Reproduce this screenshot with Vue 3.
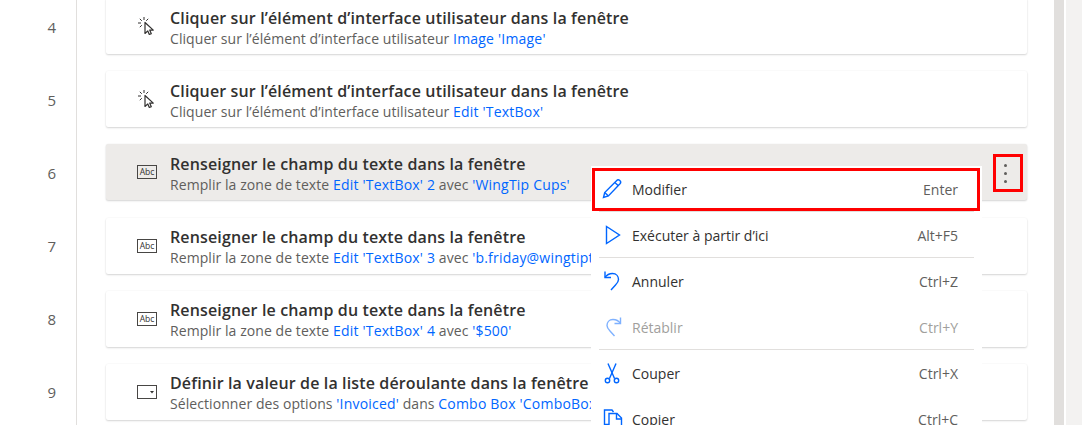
<template>
  <div class="page">
    <div class="flow">
      <div class="steps">
        <div v-for="step in steps" :key="step.num" class="step">
          <div class="num">{{ step.num }}</div>
          <div class="card" :class="{ selected: step.selected }">
            <div class="step-icon">
              <svg v-if="step.icon === 'click'" width="20" height="20" viewBox="0 0 20 20">
                <path d="M7 1v3M1 7h3M2.800 2.800l2 2M11.200 2.800l-2 2M2.800 11.200l2-2" fill="none" stroke="#323130" stroke-width="1" />
                <path d="M8 6.500v11l2.800-2.600 1.500 3.600 2-.8-1.600-3.600h3.600z" fill="#fff" stroke="#323130" stroke-width="1.200" stroke-linejoin="round" />
              </svg>
              <svg v-else-if="step.icon === 'text'" width="20" height="14" viewBox="0 0 20 14">
                <rect x=".5" y=".5" width="19" height="13" fill="none" stroke="#484644" />
                <text x="10" y="10.400" text-anchor="middle" class="abc">Abc</text>
              </svg>
              <svg v-else width="20" height="14" viewBox="0 0 20 14">
                <rect x=".5" y=".5" width="19" height="13" fill="none" stroke="#484644" />
                <path d="M13 6h4l-2 2.400z" fill="#323130" />
              </svg>
            </div>
            <div class="step-text">
              <div class="title">{{ step.title }}</div>
              <div class="sub">
                <template v-for="(part, i) in step.parts" :key="i">
                  <span :class="{ link: part.link }">{{ part.text }}</span>
                </template>
              </div>
            </div>
            <div v-if="step.selected" class="more">
              <i></i><i></i><i></i>
            </div>
          </div>
        </div>
      </div>
      <div class="scrollbar"></div>
      <div class="side"></div>
    </div>

    <!-- context menu -->
    <div class="menu">
      <div v-for="item in menu" :key="item.label" class="item" :class="{ sep: item.sep, off: item.off, hit: item.hit }">
        <span class="item-icon">
          <svg width="24" height="24" viewBox="0 0 24 24" fill="none" stroke="#0066ff" stroke-width="1.400" :opacity="item.off ? 0.5 : 1">
            <path v-for="(d, i) in item.paths" :key="i" :d="d" />
          </svg>
        </span>
        <span class="label">{{ item.label }}</span>
        <span class="key">{{ item.key }}</span>
      </div>
    </div>
  </div>
</template>

<script setup>
const clickTitle = 'Cliquer sur l’élément d’interface utilisateur dans la fenêtre'
const textTitle = 'Renseigner le champ du texte dans la fenêtre'
const clickSub = 'Cliquer sur l’élément d’interface utilisateur '
const textSub = 'Remplir la zone de texte '

const steps = [
  { num: 4, icon: 'click', title: clickTitle, parts: [{ text: clickSub }, { text: "Image 'Image'", link: true }] },
  { num: 5, icon: 'click', title: clickTitle, parts: [{ text: clickSub }, { text: "Edit 'TextBox'", link: true }] },
  {
    num: 6, icon: 'text', title: textTitle, selected: true,
    parts: [{ text: textSub }, { text: "Edit 'TextBox' 2", link: true }, { text: ' avec ' }, { text: "'WingTip Cups'", link: true }]
  },
  {
    num: 7, icon: 'text', title: textTitle,
    parts: [{ text: textSub }, { text: "Edit 'TextBox' 3", link: true }, { text: ' avec ' }, { text: "'b.friday@wingtiptoys.com'", link: true }]
  },
  {
    num: 8, icon: 'text', title: textTitle,
    parts: [{ text: textSub }, { text: "Edit 'TextBox' 4", link: true }, { text: ' avec ' }, { text: "'$500'", link: true }]
  },
  {
    num: 9, icon: 'combo', title: 'Définir la valeur de la liste déroulante dans la fenêtre',
    parts: [{ text: 'Sélectionner des options ' }, { text: "'Invoiced'", link: true }, { text: ' dans ' }, { text: "Combo Box 'ComboBox'", link: true }]
  }
]

const menu = [
  { label: 'Modifier', key: 'Enter', hit: true, sep: true, paths: ['M2.500 20.500l1.200-5L15.500 3.700a2.200 2.200 0 0 1 3.500 3.100L7.400 19z', 'M13.800 5.400l3.600 3.400', 'M3.700 15.500l3.700 3.500'] },
  { label: 'Exécuter à partir d’ici', key: 'Alt+F5', sep: true, paths: ['M5.500 3.500v17L18.500 12z'] },
  { label: 'Annuler', key: 'Ctrl+Z', paths: ['M4 2.500v6h6', 'M4 8.500C6 5.500 9 4.500 11.500 4.500c4 0 6 3 6 6 0 2.500-1.500 4-3 5.500L10 21'] },
  { label: 'Rétablir', key: 'Ctrl+Y', off: true, sep: true, paths: ['M19.500 2.500v6h-6', 'M19.500 8.500c-2-3-5-4-7.500-4-4 0-6 3-6 6 0 2.500 1.500 4 3 5.500l4.500 5'] },
  { label: 'Couper', key: 'Ctrl+X', paths: ['M7 2.500l6.500 15', 'M15 2.500L8.500 17.500', 'M8.700 19.500a2.200 2.200 0 1 1-4.400 0 2.200 2.200 0 0 1 4.400 0z', 'M17.700 19.500a2.200 2.200 0 1 1-4.400 0 2.200 2.200 0 0 1 4.400 0z'] },
  { label: 'Copier', key: 'Ctrl+C', paths: ['M8 17.500H3.500V3H11l1.500 2', 'M8 6.500h8l4.500 4.500v12H8z', 'M15.500 6.500V12h5'] }
]
</script>

<style>
html, body {
  margin: 0;
  background: #fff;
}
</style>

<style scoped>
.page {
  position: relative;
  width: 1082px;
  height: 425px;
  overflow: hidden;
  background: #fff;
  font-family: "Open Sans", "Noto Sans", sans-serif;
}

.flow {
  display: flex;
  height: 100%;
}

.steps {
  flex: 1;
  margin-top: -2px;
}

.step {
  display: flex;
  height: 73.2px;
}

.num {
  width: 77px;
  box-sizing: border-box;
  padding: 18.5px 20px 0 0;
  text-align: right;
  font-size: 15px;
  line-height: 20px;
  color: #605e5c;
  border-right: 1px solid #e1dfdd;
  flex-shrink: 0;
}

.card {
  position: relative;
  display: flex;
  align-items: center;
  width: 921px;
  height: 56px;
  margin-left: 29px;
  border-radius: 2px;
  background: #fff;
  box-shadow: 0 1px 2px rgba(0, 0, 0, 0.16), 0 0 2px rgba(0, 0, 0, 0.05);
  white-space: nowrap;
}

.card.selected {
  background: #edebe9;
}

.step-icon {
  width: 20px;
  margin-left: 31px;
  margin-right: 13px;
  display: flex;
  align-items: center;
  justify-content: center;
}

.abc {
  font-size: 8.5px;
  font-family: "Open Sans", sans-serif;
  fill: #323130;
}

.step-text {
  padding-top: 4px;
}

.title {
  font-size: 16px;
  font-weight: 600;
  line-height: 20px;
  margin-bottom: 1px;
  letter-spacing: 0.14px;
  color: #323130;
}

.sub {
  font-size: 14px;
  line-height: 20px;
  letter-spacing: 0.07px;
  color: #605e5c;
}

.link {
  color: #0066ff;
  letter-spacing: 0.2px;
}

.more {
  position: absolute;
  left: 887px;
  top: 10px;
  width: 30px;
  height: 38px;
  box-sizing: border-box;
  padding-right: 6px;
  border: 3px solid #f00;
  display: flex;
  flex-direction: column;
  align-items: center;
  justify-content: center;
  gap: 5px;
}

.more i {
  width: 3px;
  height: 3px;
  border-radius: 50%;
  background: #605e5c;
}

.scrollbar {
  width: 10px;
  margin-right: 2px;
  background: #e1dfdd;
  flex-shrink: 0;
}

.side {
  width: 16px;
  background: #f3f2f1;
  flex-shrink: 0;
}

.menu {
  position: absolute;
  left: 591px;
  top: 166px;
  width: 391px;
  background: #fff;
}

.item {
  position: relative;
  display: flex;
  align-items: center;
  height: 46px;
  box-sizing: border-box;
  padding: 0 24px 0 8px;
  font-size: 14px;
  color: #323130;
}

.item.sep::after {
  content: "";
  position: absolute;
  left: 8px;
  right: 8px;
  bottom: 0;
  height: 1px;
  background: #e1dfdd;
}

.item.hit::before {
  content: "";
  position: absolute;
  left: 1px;
  top: 2px;
  width: 388px;
  height: 43px;
  box-sizing: border-box;
  border: 3px solid #f00;
}

.item-icon {
  width: 24px;
  height: 24px;
  margin-right: 7px;
  margin-left: 2px;
}

.label {
  flex: 1;
}

.key {
  color: #605e5c;
}

.off .label,
.off .key {
  color: #a19f9d;
}
</style>
